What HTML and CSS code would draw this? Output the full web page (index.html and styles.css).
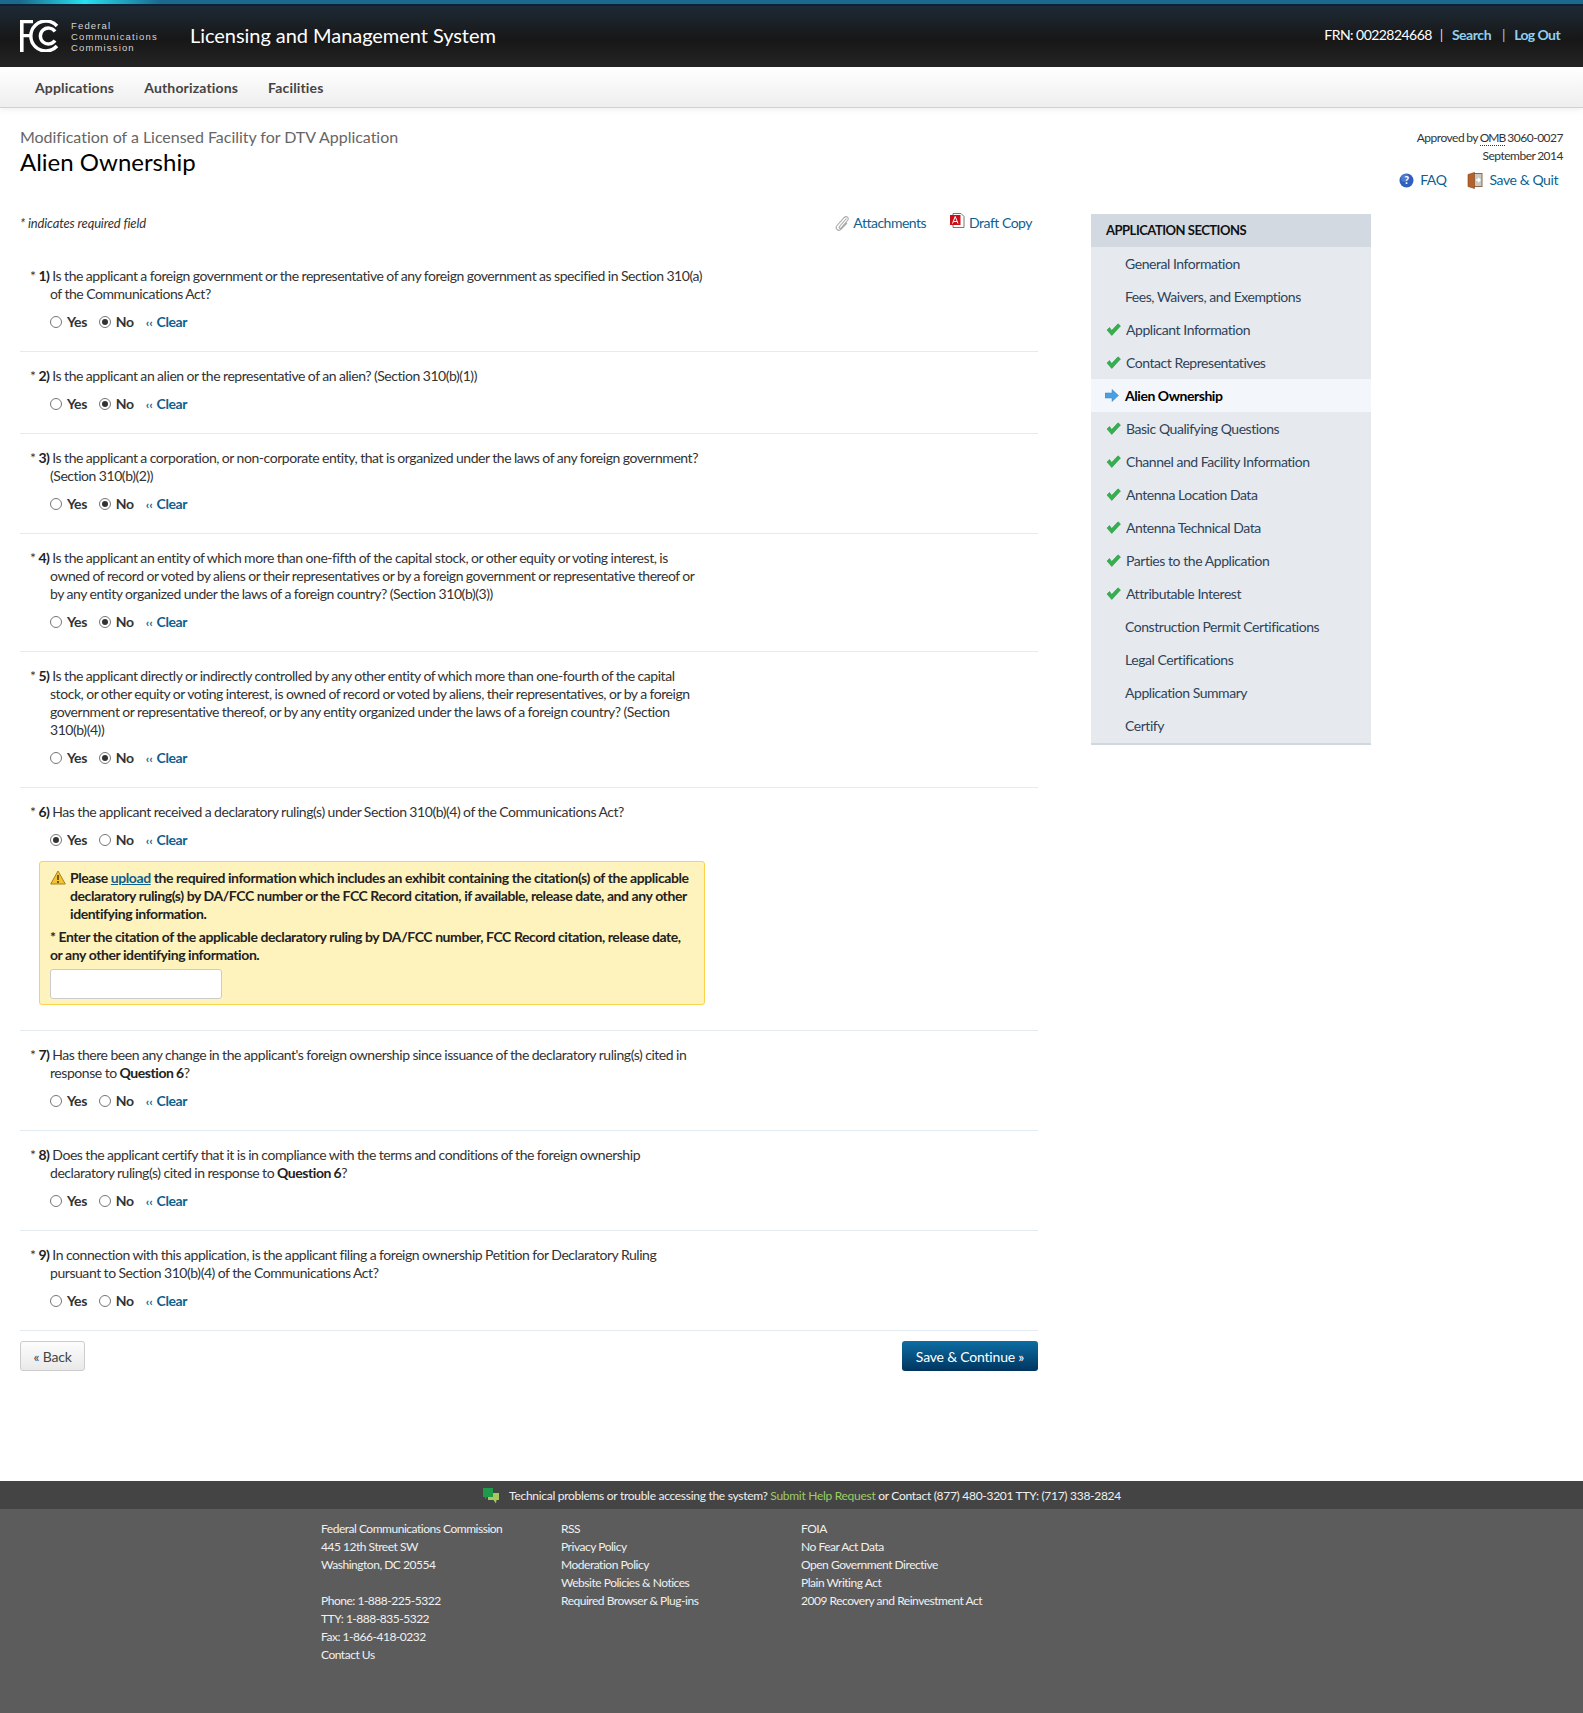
FILE: index.html
```html
<!DOCTYPE html>
<html lang="en">
<head>
<meta charset="utf-8">
<title>Alien Ownership</title>
<link rel="stylesheet" href="styles.css">
</head>
<body>
<div class="topbar"></div>
<header class="masthead">
  <div class="brand">
    <svg class="fcc-logo" width="41" height="32" viewBox="0 0 41 32"><path d="M0 0H13V3.2H3.6V14H11V17.2H3.6V32H0Z" fill="#fff"/><path d="M37 6A15 15 0 1 0 37 26" fill="none" stroke="#fff" stroke-width="3.4"/><path d="M35 11.500A8 8 0 1 0 35 20.500" fill="none" stroke="#fff" stroke-width="3.4"/></svg>
    <div class="fcc-name">Federal<br>Communications<br>Commission</div>
    <div class="system-name">Licensing and Management System</div>
  </div>
  <div class="userbar"><span>FRN: 0022824668</span><i class="pipe">|</i><a href="#">Search</a><i class="pipe pipe-b">|</i><a href="#" class="logout">Log Out</a></div>
</header>
<nav class="mainnav"><a href="#">Applications</a><a href="#">Authorizations</a><a href="#">Facilities</a></nav>

<div class="titlebar">
  <div>
    <div class="subtitle">Modification of a Licensed Facility for DTV Application</div>
    <h1>Alien Ownership</h1>
  </div>
  <div class="approval">
    <div>Approved by <abbr>OMB</abbr> 3060-0027</div>
    <div>September 2014</div>
    <div class="approval-links">
      <a href="#"><svg width="15" height="15" viewBox="0 0 15 15"><circle cx="7.500" cy="7.500" r="7" fill="#2f5fc0"/><circle cx="6" cy="5" r="4" fill="#6d93e0" opacity=".5"/><text x="7.500" y="11.200" font-size="10.500" font-weight="700" text-anchor="middle" fill="#fff" font-family="Lato">?</text></svg>FAQ</a>
      <a href="#"><svg width="16" height="17" viewBox="0 0 16 17"><rect x="6" y="1.500" width="9" height="13" fill="#c9c9c4" stroke="#8b6a4a"/><path d="M1 2.500 7.500 .5V16.500L1 14.500Z" fill="#b5622a" stroke="#7d3f18" stroke-width=".6"/><path d="M9 8h3.500M11 6l2 2-2 2" stroke="#fff" stroke-width="1.400" fill="none"/></svg>Save &amp; Quit</a>
    </div>
  </div>
</div>

<div class="workarea">
  <main class="formcol">
    <div class="formtools">
      <em>* indicates required field</em>
      <div class="tools">
        <a href="#"><svg width="14" height="16" viewBox="0 0 14 16"><path d="M11.500 3.500 4.500 11.500C3.500 12.700 5 14 6 13L12.500 5.500C14.500 3 11.500 .2 9.300 2.500L2 10.500C-.5 13.500 3.500 17 6.200 14.200L12 8" fill="none" stroke="#aaa" stroke-width="1.100"/></svg>Attachments</a>
        <a href="#" class="draft"><svg width="15" height="16" viewBox="0 0 15 16"><path d="M3 .5H11L14 3.500V14.500H3Z" fill="#fff" stroke="#777"/><rect x="0" y="2" width="10.500" height="10" fill="#c8101a"/><path d="M5.200 3.500 2.500 10.500M5.200 3.500 8 10.500M3.500 8.500H7" stroke="#fff" stroke-width="1"/></svg>Draft Copy</a>
      </div>
    </div>

    <section class="q"><p class="qtext"><span class="star">*</span> <b>1)</b> Is the applicant a foreign government or the representative of any foreign government as specified in Section 310(a) of the Communications Act?</p>
      <div class="answers"><label><input type="radio" name="q1">Yes</label><label><input type="radio" name="q1" checked>No</label><a href="#" class="clear"><small>‹‹</small> Clear</a></div></section>
    <section class="q"><p class="qtext"><span class="star">*</span> <b>2)</b> Is the applicant an alien or the representative of an alien? (Section 310(b)(1))</p>
      <div class="answers"><label><input type="radio" name="q2">Yes</label><label><input type="radio" name="q2" checked>No</label><a href="#" class="clear"><small>‹‹</small> Clear</a></div></section>
    <section class="q"><p class="qtext"><span class="star">*</span> <b>3)</b> Is the applicant a corporation, or non-corporate entity, that is organized under the laws of any foreign government? (Section 310(b)(2))</p>
      <div class="answers"><label><input type="radio" name="q3">Yes</label><label><input type="radio" name="q3" checked>No</label><a href="#" class="clear"><small>‹‹</small> Clear</a></div></section>
    <section class="q"><p class="qtext"><span class="star">*</span> <b>4)</b> Is the applicant an entity of which more than one-fifth of the capital stock, or other equity or voting interest, is owned of record or voted by aliens or their representatives or by a foreign government or representative thereof or by any entity organized under the laws of a foreign country? (Section 310(b)(3))</p>
      <div class="answers"><label><input type="radio" name="q4">Yes</label><label><input type="radio" name="q4" checked>No</label><a href="#" class="clear"><small>‹‹</small> Clear</a></div></section>
    <section class="q"><p class="qtext"><span class="star">*</span> <b>5)</b> Is the applicant directly or indirectly controlled by any other entity of which more than one-fourth of the capital stock, or other equity or voting interest, is owned of record or voted by aliens, their representatives, or by a foreign government or representative thereof, or by any entity organized under the laws of a foreign country? (Section 310(b)(4))</p>
      <div class="answers"><label><input type="radio" name="q5">Yes</label><label><input type="radio" name="q5" checked>No</label><a href="#" class="clear"><small>‹‹</small> Clear</a></div></section>
    <section class="q q-alert"><p class="qtext"><span class="star">*</span> <b>6)</b> Has the applicant received a declaratory ruling(s) under Section 310(b)(4) of the Communications Act?</p>
      <div class="answers"><label><input type="radio" name="q6" checked>Yes</label><label><input type="radio" name="q6">No</label><a href="#" class="clear"><small>‹‹</small> Clear</a></div>
      <div class="alert">
        <svg class="warn" width="16" height="15" viewBox="0 0 16 15"><path d="M8 1 15.300 14H.7Z" fill="#f4c430" stroke="#a8801a"/><path d="M8 5V10M8 11V13" stroke="#4a3a10" stroke-width="1.500"/></svg>
        <p class="alert-lead">Please <a href="#">upload</a> the required information which includes an exhibit containing the citation(s) of the applicable declaratory ruling(s) by DA/FCC number or the FCC Record citation, if available, release date, and any other identifying information.</p>
        <p class="alert-field">* Enter the citation of the applicable declaratory ruling by DA/FCC number, FCC Record citation, release date, or any other identifying information.</p>
        <input class="alert-input" type="text" aria-label="Citation">
      </div></section>
    <section class="q"><p class="qtext"><span class="star">*</span> <b>7)</b> Has there been any change in the applicant's foreign ownership since issuance of the declaratory ruling(s) cited in response to <b>Question 6</b>?</p>
      <div class="answers"><label><input type="radio" name="q7">Yes</label><label><input type="radio" name="q7">No</label><a href="#" class="clear"><small>‹‹</small> Clear</a></div></section>
    <section class="q"><p class="qtext"><span class="star">*</span> <b>8)</b> Does the applicant certify that it is in compliance with the terms and conditions of the foreign ownership declaratory ruling(s) cited in response to <b>Question 6</b>?</p>
      <div class="answers"><label><input type="radio" name="q8">Yes</label><label><input type="radio" name="q8">No</label><a href="#" class="clear"><small>‹‹</small> Clear</a></div></section>
    <section class="q"><p class="qtext"><span class="star">*</span> <b>9)</b> In connection with this application, is the applicant filing a foreign ownership Petition for Declaratory Ruling pursuant to Section 310(b)(4) of the Communications Act?</p>
      <div class="answers"><label><input type="radio" name="q9">Yes</label><label><input type="radio" name="q9">No</label><a href="#" class="clear"><small>‹‹</small> Clear</a></div></section>

    <div class="actions"><a href="#" class="btn btn-back">« Back</a><a href="#" class="btn btn-save">Save &amp; Continue »</a></div>
  </main>

  <aside class="sections">
    <h2>APPLICATION SECTIONS</h2>
    <ul>
      <li><a href="#">General Information</a></li>
      <li><a href="#">Fees, Waivers, and Exemptions</a></li>
      <li class="done"><svg class="check" viewBox="0 0 15 13"><path d="M1 7 3.500 4.500 5.700 7.500 12 .8 14.500 3 5.800 12.500Z" fill="#35b04c" stroke="#1f8a3a" stroke-width=".5"/></svg><a href="#">Applicant Information</a></li>
      <li class="done"><svg class="check" viewBox="0 0 15 13"><path d="M1 7 3.500 4.500 5.700 7.500 12 .8 14.500 3 5.800 12.500Z" fill="#35b04c" stroke="#1f8a3a" stroke-width=".5"/></svg><a href="#">Contact Representatives</a></li>
      <li class="current"><svg class="arrow" viewBox="0 0 14 13"><path d="M0 4H7V.5L13.500 6.500 7 12.500V9H0Z" fill="#4a9fe0" stroke="#3b86c4" stroke-width=".5"/></svg><a href="#">Alien Ownership</a></li>
      <li class="done"><svg class="check" viewBox="0 0 15 13"><path d="M1 7 3.500 4.500 5.700 7.500 12 .8 14.500 3 5.800 12.500Z" fill="#35b04c" stroke="#1f8a3a" stroke-width=".5"/></svg><a href="#">Basic Qualifying Questions</a></li>
      <li class="done"><svg class="check" viewBox="0 0 15 13"><path d="M1 7 3.500 4.500 5.700 7.500 12 .8 14.500 3 5.800 12.500Z" fill="#35b04c" stroke="#1f8a3a" stroke-width=".5"/></svg><a href="#">Channel and Facility Information</a></li>
      <li class="done"><svg class="check" viewBox="0 0 15 13"><path d="M1 7 3.500 4.500 5.700 7.500 12 .8 14.500 3 5.800 12.500Z" fill="#35b04c" stroke="#1f8a3a" stroke-width=".5"/></svg><a href="#">Antenna Location Data</a></li>
      <li class="done"><svg class="check" viewBox="0 0 15 13"><path d="M1 7 3.500 4.500 5.700 7.500 12 .8 14.500 3 5.800 12.500Z" fill="#35b04c" stroke="#1f8a3a" stroke-width=".5"/></svg><a href="#">Antenna Technical Data</a></li>
      <li class="done"><svg class="check" viewBox="0 0 15 13"><path d="M1 7 3.500 4.500 5.700 7.500 12 .8 14.500 3 5.800 12.500Z" fill="#35b04c" stroke="#1f8a3a" stroke-width=".5"/></svg><a href="#">Parties to the Application</a></li>
      <li class="done"><svg class="check" viewBox="0 0 15 13"><path d="M1 7 3.500 4.500 5.700 7.500 12 .8 14.500 3 5.800 12.500Z" fill="#35b04c" stroke="#1f8a3a" stroke-width=".5"/></svg><a href="#">Attributable Interest</a></li>
      <li><a href="#">Construction Permit Certifications</a></li>
      <li><a href="#">Legal Certifications</a></li>
      <li><a href="#">Application Summary</a></li>
      <li><a href="#">Certify</a></li>
    </ul>
  </aside>
</div>

<footer class="footer">
  <div class="helpbar"><svg width="18" height="16" viewBox="0 0 18 16"><path d="M6 5H17V12H14.500L14 15.500 11.500 12H6Z" fill="#a6c85c"/><path d="M1 0H11V9H5L3 11.500V9H1Z" fill="#1f9a4a"/></svg><span>Technical problems or trouble accessing the system? <a href="#">Submit Help Request</a> or Contact (877) 480-3201 TTY: (717) 338-2824</span></div>
  <div class="footcols">
    <div class="footcol">Federal Communications Commission<br>445 12th Street SW<br>Washington, DC 20554<br><br>Phone: 1-888-225-5322<br>TTY: 1-888-835-5322<br>Fax: 1-866-418-0232<br><a href="#">Contact Us</a></div>
    <div class="footcol"><a href="#">RSS</a><br><a href="#">Privacy Policy</a><br><a href="#">Moderation Policy</a><br><a href="#">Website Policies &amp; Notices</a><br><a href="#">Required Browser &amp; Plug-ins</a></div>
    <div class="footcol"><a href="#">FOIA</a><br><a href="#">No Fear Act Data</a><br><a href="#">Open Government Directive</a><br><a href="#">Plain Writing Act</a><br><a href="#">2009 Recovery and Reinvestment Act</a></div>
  </div>
</footer>
</body>
</html>
```
FILE: styles.css
```css
* { box-sizing: border-box; }
html, body { margin: 0; padding: 0; }
body { font-family: Lato, "Open Sans", sans-serif; font-size: 14px; line-height: 18px; letter-spacing: -.42px; color: #333; background: #fff; width: 1583px; height: 1713px; display: flex; flex-direction: column; overflow: hidden; }
a { color: #0f5f8f; text-decoration: none; }
p { margin: 0; }

.topbar { height: 6px; background: linear-gradient(90deg, #1a6a8e 20px, #27e0f0 85px, #1a6a8e 160px, #1a6a8e 100%); border-bottom: 2px solid #0b2238; flex: none; }
.masthead { height: 61px; flex: none; background: linear-gradient(#1e2a36, #171717 55%, #252525); display: flex; justify-content: space-between; align-items: center; padding: 0 23px 0 20px; }
.brand { display: flex; align-items: center; }
.fcc-logo { display: block; margin-top: -1px; }
.fcc-name { font-family: "Liberation Sans", sans-serif; font-size: 9.500px; line-height: 11px; letter-spacing: 1.150px; color: #d4d4d4; margin-left: 10px; width: 119px; margin-top: -1px; }
.system-name { font-size: 20px; line-height: 24px; letter-spacing: -.05px; color: #fff; margin-top: -3px; }
.userbar { color: #fff; font-size: 14px; display: flex; align-items: center; margin-top: -3px; }
.userbar span { letter-spacing: -.55px; }
.userbar a { color: #8fd0f0; font-weight: 700; letter-spacing: -.45px; }
.userbar .logout { letter-spacing: -.6px; }
.pipe { font-style: normal; margin: 0 9px 0 8px; color: #ddd; font-weight: 400; }
.pipe-b { margin: 0 9px 0 11px; color: #8fd0f0; }

.mainnav { height: 41px; flex: none; display: flex; gap: 30px; align-items: center; padding: 2px 0 0 35px; background: linear-gradient(#fff, #eee); border-bottom: 1px solid #d0d0d0; box-shadow: 0 2px 6px rgba(0,0,0,.06); }
.mainnav a { color: #444; font-weight: 700; font-size: 14px; letter-spacing: .16px; }

.titlebar { flex: none; display: flex; justify-content: space-between; padding: 19px 20px 0; height: 104px; }
.subtitle { font-size: 16px; line-height: 20px; letter-spacing: -.03px; color: #666; }
h1 { margin: 0; font-size: 24px; line-height: 30px; font-weight: 400; letter-spacing: 0; color: #000; }
.approval { text-align: right; font-size: 12px; line-height: 18px; letter-spacing: -.5px; word-spacing: -.5px; color: #333; padding-top: 2px; }
.approval abbr { border-bottom: 1px dotted #333; letter-spacing: -1px; }
.approval-links { display: flex; justify-content: flex-end; gap: 21px; font-size: 14px; margin: 6px 5px 0 0; letter-spacing: -.42px; word-spacing: 0; }
.approval-links a { display: flex; align-items: center; gap: 6px; }

.workarea { flex: 1; display: flex; align-items: flex-start; padding-left: 20px; }
.formcol { width: 1018px; }
.formtools { display: flex; justify-content: space-between; height: 41px; padding: 0 6px 0 0; }
.formtools em { font-size: 13px; color: #333; line-height: 18px; letter-spacing: -.15px; margin-top: 2px; }
.tools { display: flex; gap: 24px; margin-top: 1px; letter-spacing: -.5px; }
.tools a { display: flex; align-items: center; gap: 4px; height: 20px; }
.tools .draft svg { margin-top: -5px; }

.q { padding: 15px 0 20px 10px; border-bottom: 1px solid #e3ebf2; }
.q:first-of-type { padding-top: 14px; }
.qtext { width: 675px; padding-left: 20px; text-indent: -20px; color: #333; letter-spacing: -.44px; word-spacing: -.3px; overflow-wrap: normal; }
.qtext b { color: #222; }
.answers { display: flex; align-items: center; height: 18px; margin: 10px 0 0 20px; font-weight: 700; }
.answers label { display: flex; align-items: center; color: #333; margin-right: 12px; }
.answers input { appearance: none; width: 12px; height: 12px; margin: 0 5px 0 0; border: 1px solid #767676; border-radius: 50%; background: #fff; display: grid; place-items: center; }
.answers input:checked::before { content: ""; width: 6px; height: 6px; border-radius: 50%; background: #333; }
.clear { color: #0f5f8f; }
.clear small { font-size: 12px; letter-spacing: 0; margin-right: 1px; }

.q-alert { padding-bottom: 25px; }
.alert { position: relative; width: 666px; height: 144px; margin: 12px 0 0 9px; padding: 7px 10px 0; background: #fff3bd; border: 1px solid #fcd34d; border-radius: 3px; color: #222; font-weight: 700; }
.warn { position: absolute; left: 10px; top: 8px; }
.alert-lead { padding-left: 20px; }
.alert-lead a { text-decoration: underline; }
.alert-field { margin-top: 5px; }
.alert-input { display: block; width: 172px; height: 30px; margin-top: 5px; border: 1px solid #ccc; border-radius: 3px; background: #fff; }

.actions { display: flex; justify-content: space-between; margin-top: 10px; }
.btn { display: flex; align-items: center; justify-content: center; height: 30px; padding-top: 1px; border-radius: 3px; font-size: 14px; letter-spacing: -.2px; }
.btn-back { width: 65px; background: linear-gradient(#fdfdfd, #e9e9e9); border: 1px solid #ccc; color: #444; }
.btn-save { width: 136px; background: linear-gradient(#0d6ea3, #00355f); color: #fff; }

.sections { width: 280px; margin: 2px 0 0 53px; padding-bottom: 1px; background: #e6eaef; border-bottom: 2px solid #cfd8e0; letter-spacing: -.45px; }
.sections h2 { margin: 0; height: 33px; padding: 0 15px; background: #d3d9e1; font-size: 13px; line-height: 33px; letter-spacing: -.5px; font-weight: 700; color: #111; }
.sections ul { list-style: none; margin: 0; padding: 0; }
.sections li { height: 33px; display: flex; align-items: center; padding-left: 34px; position: relative; }
.sections a { color: #2f4358; }
.sections li.done a { margin-left: 1px; }
.check { position: absolute; left: 15px; top: 10px; width: 15px; height: 13px; }
.arrow { position: absolute; left: 14px; top: 10px; width: 14px; height: 13px; }
.current { background: #f3f6fa; }
.sections .current a { color: #000; font-weight: 700; }

.footer { flex: none; height: 232px; background: #5c5c5c; color: #f0f0f0; font-size: 12px; letter-spacing: -.48px; }
.footer a { color: inherit; }
.helpbar { height: 28px; background: #444; display: flex; align-items: center; justify-content: center; gap: 9px; padding: 2px 0 0 20px; letter-spacing: -.29px; }
.helpbar a { color: #9ccc65; }
.footcols { display: flex; padding: 11px 0 0 321px; }
.footcol { width: 240px; }
```
